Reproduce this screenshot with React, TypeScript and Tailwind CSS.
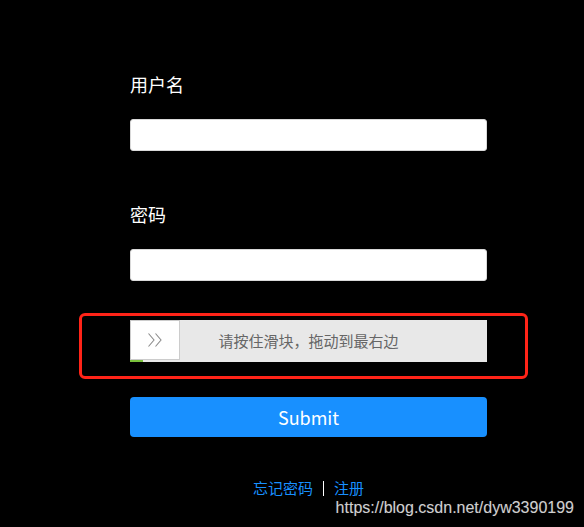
import React from "react";

export default function App() {
  const cjk = { fontFamily: '"Noto Sans CJK SC", "Noto Sans", sans-serif' } as React.CSSProperties;
  return (
    <div className="relative w-[584px] h-[527px] bg-black overflow-hidden" style={cjk}>
      <div className="ml-[130px] w-[357px] pt-[74px] flex flex-col">
        <div className="h-[24px] leading-[21px] text-[18px] text-white">用户名</div>
        <input className="mt-[21px] h-[32px] w-full bg-white border border-[#d9d9d9] rounded-[3px] outline-none" />
        <div className="mt-[53px] h-[24px] leading-[21px] text-[18px] text-white">密码</div>
        <input type="password" className="mt-[21px] h-[32px] w-full bg-white border border-[#d9d9d9] rounded-[3px] outline-none" />

        <div className="relative mt-[39px] h-[42px] w-full bg-[#e8e8e8]">
          <div className="absolute left-0 bottom-0 h-[2px] w-[13px] bg-[#7ac23c]" />
          <div className="absolute left-0 top-0 h-[40px] w-[50px] bg-white border border-[#cccccc] flex items-center justify-center">
            <svg width="16" height="16" viewBox="0 0 16 16" fill="none" stroke="#8c8c8c" strokeWidth="1.1">
              <path d="M1.5 1.5 L7 8 L1.5 14.5" />
              <path d="M8.5 1.5 L14 8 L8.5 14.5" />
            </svg>
          </div>
          <div className="absolute inset-0 flex items-center justify-center text-[15px] text-[#666666]">
            请按住滑块，拖动到最右边
          </div>
          <div className="absolute left-[-51px] top-[-7px] w-[449px] h-[66px] border-[3px] border-[#ff2418] rounded-[6px] pointer-events-none" />
        </div>

        <button className="mt-[35px] h-[40px] w-full bg-[#1890ff] rounded-[4px] text-white text-[18px] flex items-center justify-center">
          Submit
        </button>

        <div className="mt-[41px] h-[20px] flex items-center justify-center text-[15px] text-[#1890ff]">
          <span>忘记密码</span>
          <span className="mx-[10px] w-[1px] h-[15px] bg-white" />
          <span>注册</span>
        </div>
      </div>
      <div
        className="absolute right-[10px] bottom-[9px] text-[16px] leading-[20px] text-[#cfcfcf]"
        style={{ fontFamily: '"Liberation Sans", Arial, sans-serif', textShadow: "0 0 1px #333" }}
      >
        https://blog.csdn.net/dyw3390199
      </div>
    </div>
  );
}
